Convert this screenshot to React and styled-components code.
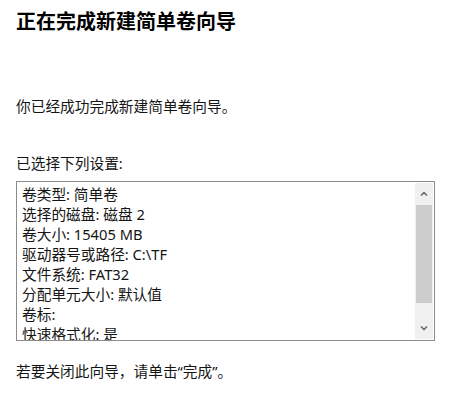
import React from "react";
import styled, { createGlobalStyle } from "styled-components";

const Global = createGlobalStyle`
  html, body { margin: 0; padding: 0; background: #fff; }
  body { font-family: "Noto Sans", "Noto Sans CJK SC", sans-serif; color: #111; }
`;

const Page = styled.div`
  width: 468px;
  height: 398px;
  box-sizing: border-box;
  padding: 7px 16px 0 16px;
  display: flex;
  flex-direction: column;
  overflow: hidden;
`;

const Title = styled.h1`
  margin: 0;
  font-family: "Noto Sans CJK SC", sans-serif;
  font-size: 20px;
  line-height: 28px;
  font-weight: 700;
  color: #000;
`;

const Text = styled.p`
  margin: ${(p) => p.$mt || 0}px 0 0 0;
  font-size: 14.7px;
  line-height: 20px;
  color: #151515;
`;

const ListBox = styled.div`
  margin-top: 8px;
  width: 419px;
  height: 160px;
  box-sizing: border-box;
  border: 1px solid #8c8c8c;
  display: flex;
  background: #fff;
`;

const Lines = styled.div`
  flex: 1;
  overflow: hidden;
  padding: 2px 0 0 5px;
`;

const Line = styled.div`
  font-size: 14.7px;
  line-height: 20px;
  color: #151515;
  white-space: nowrap;
`;

const ScrollBar = styled.div`
  width: 18px;
  margin: 1px 1px 1px 0;
  background: #f0f0f0;
  display: flex;
  flex-direction: column;
`;

const Arrow = styled.div`
  height: 22px;
  display: flex;
  align-items: center;
  justify-content: center;
  flex-shrink: 0;
`;

const Thumb = styled.div`
  height: 98px;
  margin: 0 1px;
  background: #cdcdcd;
`;

const Track = styled.div`
  flex: 1;
`;

const Chevron = ({ down }) => (
  <svg width="8" height="6" viewBox="0 0 8 6">
    <path
      d={down ? "M1 1.5 L4 4.5 L7 1.5" : "M1 4.5 L4 1.5 L7 4.5"}
      fill="none"
      stroke="#606060"
      strokeWidth="1.5"
    />
  </svg>
);

const items = [
  "卷类型: 简单卷",
  "选择的磁盘: 磁盘 2",
  "卷大小: 15405 MB",
  "驱动器号或路径: C:\\TF",
  "文件系统: FAT32",
  "分配单元大小: 默认值",
  "卷标:",
  "快速格式化: 是",
];

export default function App() {
  return (
    <>
      <Global />
      <Page>
        <Title>正在完成新建简单卷向导</Title>
        <Text $mt={61}>你已经成功完成新建简单卷向导。</Text>
        <Text $mt={37}>已选择下列设置:</Text>
        <ListBox>
          <Lines>
            {items.map((t) => (
              <Line key={t}>{t}</Line>
            ))}
          </Lines>
          <ScrollBar>
            <Arrow>
              <Chevron />
            </Arrow>
            <Thumb />
            <Track />
            <Arrow>
              <Chevron down />
            </Arrow>
          </ScrollBar>
        </ListBox>
        <Text $mt={20}>若要关闭此向导，请单击“完成”。</Text>
      </Page>
    </>
  );
}
